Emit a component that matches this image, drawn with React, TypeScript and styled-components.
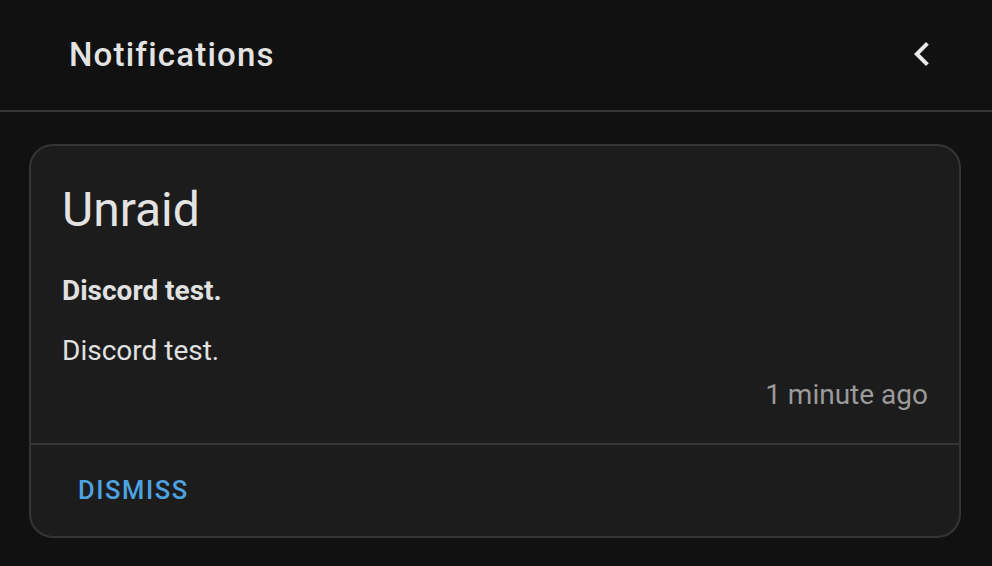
import React from "react";
import styled, { createGlobalStyle } from "styled-components";

const GlobalStyle = createGlobalStyle`
  html, body {
    margin: 0;
    padding: 0;
    background: #111111;
    font-family: Roboto, "Noto Sans", "Liberation Sans", sans-serif;
    -webkit-font-smoothing: antialiased;
  }
`;

const Page = styled.div`
  width: 992px;
  height: 566px;
  background: #111111;
  display: flex;
  flex-direction: column;
  overflow: hidden;
`;

const Header = styled.header`
  height: 110px;
  flex: 0 0 auto;
  display: flex;
  align-items: center;
  justify-content: space-between;
  padding: 0 46px 0 69px;
  border-bottom: 2px solid #363636;
`;

const Title = styled.h1`
  margin: 0;
  font-size: 33px;
  line-height: 38px;
  font-weight: 500;
  color: #e3e3e3;
  letter-spacing: 1.2px;
`;

const IconButton = styled.button`
  width: 48px;
  height: 48px;
  padding: 0;
  margin-top: -2px;
  border: none;
  background: transparent;
  color: #e8e8e8;
  display: flex;
  align-items: center;
  justify-content: center;
  cursor: pointer;
`;

const Card = styled.section`
  margin: 32px 31px 0 29px;
  background: #1c1c1c;
  border: 2px solid #353535;
  border-radius: 24px;
  display: flex;
  flex-direction: column;
`;

const Content = styled.div`
  padding: 36px 31px 32px 31px;
  display: flex;
  flex-direction: column;
`;

const CardTitle = styled.h2`
  margin: 0;
  font-size: 48px;
  line-height: 56px;
  font-weight: 400;
  color: #e3e3e3;
`;

const Message = styled.p<{ $bold?: boolean; $gap: number }>`
  margin: ${(p) => p.$gap}px 0 0;
  font-size: 28px;
  line-height: 32px;
  font-weight: ${(p) => (p.$bold ? 700 : 400)};
  color: #e1e1e1;
`;

const Time = styled.div`
  margin-top: 12px;
  font-size: 28px;
  line-height: 32px;
  color: #9a9a9a;
  text-align: right;
`;

const Actions = styled.div`
  height: 91px;
  border-top: 2px solid #353535;
  display: flex;
  align-items: center;
  padding-left: 47px;
`;

const TextButton = styled.button`
  border: none;
  background: transparent;
  padding: 0;
  margin-top: -2px;
  font-family: inherit;
  font-size: 25.5px;
  font-weight: 500;
  letter-spacing: 1.6px;
  color: #4ea2e0;
  text-transform: uppercase;
  cursor: pointer;
`;

export default function App() {
  return (
    <>
      <GlobalStyle />
      <Page>
        <Header>
          <Title>Notifications</Title>
          <IconButton aria-label="Close">
            <svg width="48" height="48" viewBox="0 0 24 24" fill="currentColor">
              <path d="M15.41,16.58L10.83,12L15.41,7.41L14,6L8,12L14,18L15.41,16.58Z" />
            </svg>
          </IconButton>
        </Header>
        <Card>
          <Content>
            <CardTitle>Unraid</CardTitle>
            <Message $bold $gap={37}>Discord test.</Message>
            <Message $gap={28}>Discord test.</Message>
            <Time>1 minute ago</Time>
          </Content>
          <Actions>
            <TextButton>Dismiss</TextButton>
          </Actions>
        </Card>
      </Page>
    </>
  );
}
